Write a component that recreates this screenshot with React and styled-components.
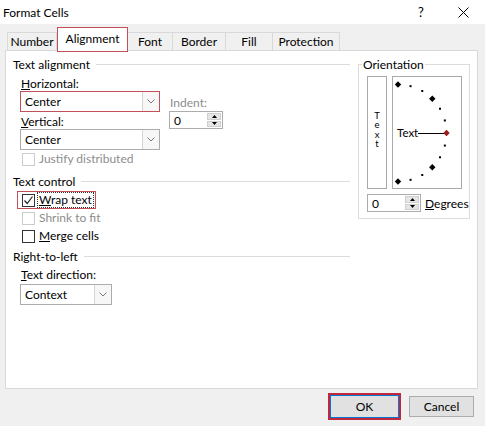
import React from 'react';
import styled, { createGlobalStyle } from 'styled-components';

const GlobalStyle = createGlobalStyle`
  body {
    margin: 0;
    background: #f0f0f0;
    font-family: Lato, "Noto Sans", sans-serif;
    font-size: 12px;
    color: #000;
  }
  * { box-sizing: border-box; }
`;

const RED = '#c0505a';

const Dialog = styled.div`
  width: 485px;
  height: 426px;
  background: #f0f0f0;
  display: flex;
  flex-direction: column;
  overflow: hidden;
`;

const TitleBar = styled.div`
  height: 24px;
  flex: 0 0 24px;
  background: #fff;
  display: flex;
  align-items: center;
  padding-left: 3px;
`;

const Title = styled.span`
  flex: 1;
  font-size: 12px;
`;

const TitleButton = styled.span`
  width: ${(p) => p.w}px;
  height: 24px;
  display: flex;
  align-items: center;
  justify-content: center;
  font-size: 13px;
`;

const TabStrip = styled.div`
  flex: 0 0 26px;
  display: flex;
  align-items: flex-end;
  padding-left: 7px;
`;

const Tab = styled.div`
  width: ${(p) => p.w}px;
  height: ${(p) => (p.active ? 25 : 18)}px;
  margin-bottom: ${(p) => (p.active ? -2 : 0)}px;
  border: 1px solid ${(p) => (p.active ? RED : '#d9d9d9')};
  border-bottom: ${(p) => (p.active ? `1px solid ${RED}` : 'none')};
  border-left: ${(p) => (p.first || p.active ? '' : 'none')};
  background: ${(p) => (p.active ? '#fff' : '#f0f0f0')};
  display: flex;
  align-items: center;
  justify-content: center;
  padding-bottom: ${(p) => (p.active ? 2 : 0)}px;
  position: relative;
  z-index: ${(p) => (p.active ? 2 : 0)};
`;

const Panel = styled.div`
  flex: 0 0 339px;
  margin: 0 7px 0 5px;
  border: 1px solid #d9d9d9;
  background: #fff;
  display: flex;
  gap: 8px;
  padding: 6px 7px 0 7px;
  position: relative;
  z-index: 1;
`;

const LeftColumn = styled.div`
  width: 337px;
  flex: 0 0 337px;
  display: flex;
  flex-direction: column;
`;

const GroupHeading = styled.div`
  display: flex;
  align-items: center;
  gap: 6px;
  height: 15px;
  line-height: 15px;
  margin-top: ${(p) => p.mt || 0}px;

  &::after {
    content: '';
    flex: 1;
    height: 1px;
    background: #dcdcdc;
  }
`;

const GroupBody = styled.div`
  padding-left: 7px;
  display: flex;
  flex-direction: column;
`;

const Row = styled.div`
  display: flex;
`;

const Col = styled.div`
  display: flex;
  flex-direction: column;
  align-items: flex-start;
  padding-top: ${(p) => p.pt || 0}px;
  margin-left: ${(p) => p.ml || 0}px;
`;

const FieldLabel = styled.div`
  height: 15px;
  line-height: 15px;
  padding-left: 1px;
  margin-top: ${(p) => p.mt || 0}px;
  color: ${(p) => (p.disabled ? '#8d8d8d' : '#000')};
`;

const Combo = styled.div`
  width: ${(p) => p.w}px;
  height: 21px;
  border: 1px solid ${(p) => (p.highlight ? RED : '#acacac')};
  background: #fff;
  display: flex;
  align-items: center;
  margin-top: ${(p) => p.mt || 0}px;
`;

const ComboText = styled.span`
  flex: 1;
  padding-left: 4px;
`;

const ComboArrow = styled.span`
  width: 17px;
  height: 100%;
  border-left: 1px solid #d4d4d4;
  background: #f7f7f7;
  display: flex;
  align-items: center;
  justify-content: center;
`;

const Spinner = styled.div`
  width: 54px;
  flex-shrink: 0;
  height: ${(p) => p.h || 18}px;
  border: 1px solid #acacac;
  background: #fff;
  display: flex;
  margin-top: ${(p) => p.mt || 0}px;
`;

const SpinValue = styled.span`
  flex: 1;
  padding-left: 4px;
  display: flex;
  align-items: center;
`;

const SpinButtons = styled.span`
  width: 15px;
  display: flex;
  flex-direction: column;
  padding: 1px 1px 1px 0;
  gap: 1px;
`;

const SpinHalf = styled.span`
  flex: 1;
  background: #e6e6e6;
  border: 1px solid #cfcfcf;
  display: flex;
  align-items: center;
  justify-content: center;
`;

const CheckRow = styled.div`
  display: flex;
  align-items: center;
  width: fit-content;
  height: 18px;
  gap: 2px;
  padding: ${(p) => (p.highlight ? '0 1px 0 4px' : '0 0 0 2px')};
  margin-left: ${(p) => (p.highlight ? -3 : 0)}px;
  margin-top: ${(p) => p.mt || 0}px;
  border: ${(p) => (p.highlight ? `1px solid ${RED}` : 'none')};
  color: ${(p) => (p.disabled ? '#8d8d8d' : '#000')};
`;

const Box = styled.span`
  width: 13px;
  height: 13px;
  border: 1px solid ${(p) => (p.disabled ? '#cccccc' : '#333')};
  background: #fff;
  display: flex;
  align-items: center;
  justify-content: center;
`;

const CheckText = styled.span`
  padding: 0 1px;
  line-height: 14px;
  border: 1px ${(p) => (p.focus ? 'dotted #333' : 'solid transparent')};
`;

const Orientation = styled.fieldset`
  margin: 0;
  min-width: 0;
  width: 112px;
  flex: 0 0 112px;
  height: 162px;
  border: 1px solid #dcdcdc;
  padding: 4px 7px 5px 8px;
  display: flex;
  flex-direction: column;
`;

const Legend = styled.legend`
  padding: 0 1px;
  margin-left: -5px;
  line-height: 15px;
`;

const OrientBoxes = styled.div`
  display: flex;
  gap: 5px;
  height: 113px;
`;

const VerticalText = styled.div`
  width: 20px;
  border: 1px solid #a9a9a9;
  display: flex;
  flex-direction: column;
  align-items: center;
  justify-content: center;
  font-size: 9.5px;
  line-height: 9.5px;
  padding-bottom: 6px;
`;

const DialBox = styled.div`
  width: 70px;
  border: 1px solid #a9a9a9;
`;

const DegreesRow = styled.div`
  display: flex;
  align-items: center;
  gap: 4px;
  margin-top: 5px;
  white-space: nowrap;
`;

const Footer = styled.div`
  flex: 1;
  display: flex;
  justify-content: flex-end;
  align-items: center;
  gap: 8px;
  padding: 0 11px 2px 0;
`;

const Button = styled.button`
  width: ${(p) => (p.primary ? 73 : 65)}px;
  height: ${(p) => (p.primary ? 27 : 21)}px;
  border: ${(p) => (p.primary ? '2px solid #c3283a' : '1px solid #adadad')};
  box-shadow: ${(p) => (p.primary ? 'inset 0 0 0 1px #0078d7' : 'none')};
  background: #e1e1e1;
  font-family: inherit;
  font-size: 12px;
  color: #000;
  padding: 0;
`;

const Chevron = () => (
  <svg width="8" height="5" viewBox="0 0 8 5">
    <path d="M0.5 0.5 L4 4 L7.5 0.5" fill="none" stroke="#7a7a7a" strokeWidth="1" />
  </svg>
);

const Tri = ({ up }) => (
  <svg width="5" height="3" viewBox="0 0 5 3">
    <path d={up ? 'M0 3 L2.5 0 L5 3 Z' : 'M0 0 L2.5 3 L5 0 Z'} fill="#000" />
  </svg>
);

const Check = () => (
  <svg width="11" height="11" viewBox="0 0 11 11">
    <path d="M1.5 5.5 L4.2 8.5 L9.5 1.5" fill="none" stroke="#222" strokeWidth="1.2" />
  </svg>
);

const Close = () => (
  <svg width="11" height="11" viewBox="0 0 11 11">
    <path d="M0.5 0.5 L10.5 10.5 M10.5 0.5 L0.5 10.5" stroke="#000" strokeWidth="1" />
  </svg>
);

const Spin = ({ h, mt }) => (
  <Spinner h={h} mt={mt}>
    <SpinValue>0</SpinValue>
    <SpinButtons>
      <SpinHalf><Tri up /></SpinHalf>
      <SpinHalf><Tri /></SpinHalf>
    </SpinButtons>
  </Spinner>
);

const Checkbox = ({ checked, disabled, highlight, focus, mt, children }) => (
  <CheckRow highlight={highlight} disabled={disabled} mt={mt}>
    <Box disabled={disabled}>{checked && <Check />}</Box>
    <CheckText focus={focus}>{children}</CheckText>
  </CheckRow>
);

const Dial = () => {
  const cx = 5;
  const cy = 56;
  const r = 48.5;
  const angles = [90, 75, 60, 45, 30, 15, 0, -15, -30, -45, -60, -75, -90];
  return (
    <svg width="68" height="111" viewBox="0 0 68 111">
      {angles.map((a) => {
        const x = cx + r * Math.cos((a * Math.PI) / 180);
        const y = cy - r * Math.sin((a * Math.PI) / 180);
        if (a % 45 === 0) {
          const s = 3.2;
          return (
            <path
              key={a}
              d={`M${x} ${y - s} L${x + s} ${y} L${x} ${y + s} L${x - s} ${y} Z`}
              fill={a === 0 ? '#9a1c1c' : '#000'}
            />
          );
        }
        return <rect key={a} x={x - 1} y={y - 1} width="2" height="2" fill="#000" />;
      })}
      <text x="4" y="60" fontSize="11.5" fontFamily="Lato, sans-serif">Text</text>
      <line x1="25" y1="56.5" x2="51" y2="56.5" stroke="#000" strokeWidth="1" />
    </svg>
  );
};

const tabs = [
  ['Number', 50],
  ['Alignment', 71],
  ['Font', 45],
  ['Border', 53],
  ['Fill', 47],
  ['Protection', 67]
];

export default function App() {
  return (
    <Dialog>
      <GlobalStyle />
      <TitleBar>
        <Title>Format Cells</Title>
        <TitleButton w={40}>?</TitleButton>
        <TitleButton w={44}><Close /></TitleButton>
      </TitleBar>

      <TabStrip>
        {tabs.map(([name, w], i) => (
          <Tab key={name} w={w} first={i === 0} active={name === 'Alignment'}>
            {name}
          </Tab>
        ))}
      </TabStrip>

      <Panel>
        <LeftColumn>
          <GroupHeading>Text alignment</GroupHeading>
          <GroupBody>
            <Row>
              <Col>
                <FieldLabel mt={4}><u>H</u>orizontal:</FieldLabel>
                <Combo w={140} highlight>
                  <ComboText>Center</ComboText>
                  <ComboArrow><Chevron /></ComboArrow>
                </Combo>
                <FieldLabel mt={2}><u>V</u>ertical:</FieldLabel>
                <Combo w={140}>
                  <ComboText>Center</ComboText>
                  <ComboArrow><Chevron /></ComboArrow>
                </Combo>
              </Col>
              <Col ml={9} pt={23}>
                <FieldLabel disabled>Indent:</FieldLabel>
                <Spin mt={1} />
              </Col>
            </Row>
            <Checkbox disabled>Justify distributed</Checkbox>
          </GroupBody>

          <GroupHeading mt={6}>Text control</GroupHeading>
          <GroupBody>
            <Checkbox checked highlight focus mt={2}><u>W</u>rap text</Checkbox>
            <Checkbox disabled>Shrink to fit</Checkbox>
            <Checkbox><u>M</u>erge cells</Checkbox>
          </GroupBody>

          <GroupHeading mt={4}>Right-to-left</GroupHeading>
          <GroupBody>
            <FieldLabel mt={3}><u>T</u>ext direction:</FieldLabel>
            <Combo w={92} mt={2}>
              <ComboText>Context</ComboText>
              <ComboArrow><Chevron /></ComboArrow>
            </Combo>
          </GroupBody>
        </LeftColumn>

        <Orientation>
          <Legend>Orientation</Legend>
          <OrientBoxes>
            <VerticalText>
              <span>T</span>
              <span>e</span>
              <span>x</span>
              <span>t</span>
            </VerticalText>
            <DialBox><Dial /></DialBox>
          </OrientBoxes>
          <DegreesRow>
            <Spin h={18} />
            <span><u>D</u>egrees</span>
          </DegreesRow>
        </Orientation>
      </Panel>

      <Footer>
        <Button primary>OK</Button>
        <Button>Cancel</Button>
      </Footer>
    </Dialog>
  );
}
